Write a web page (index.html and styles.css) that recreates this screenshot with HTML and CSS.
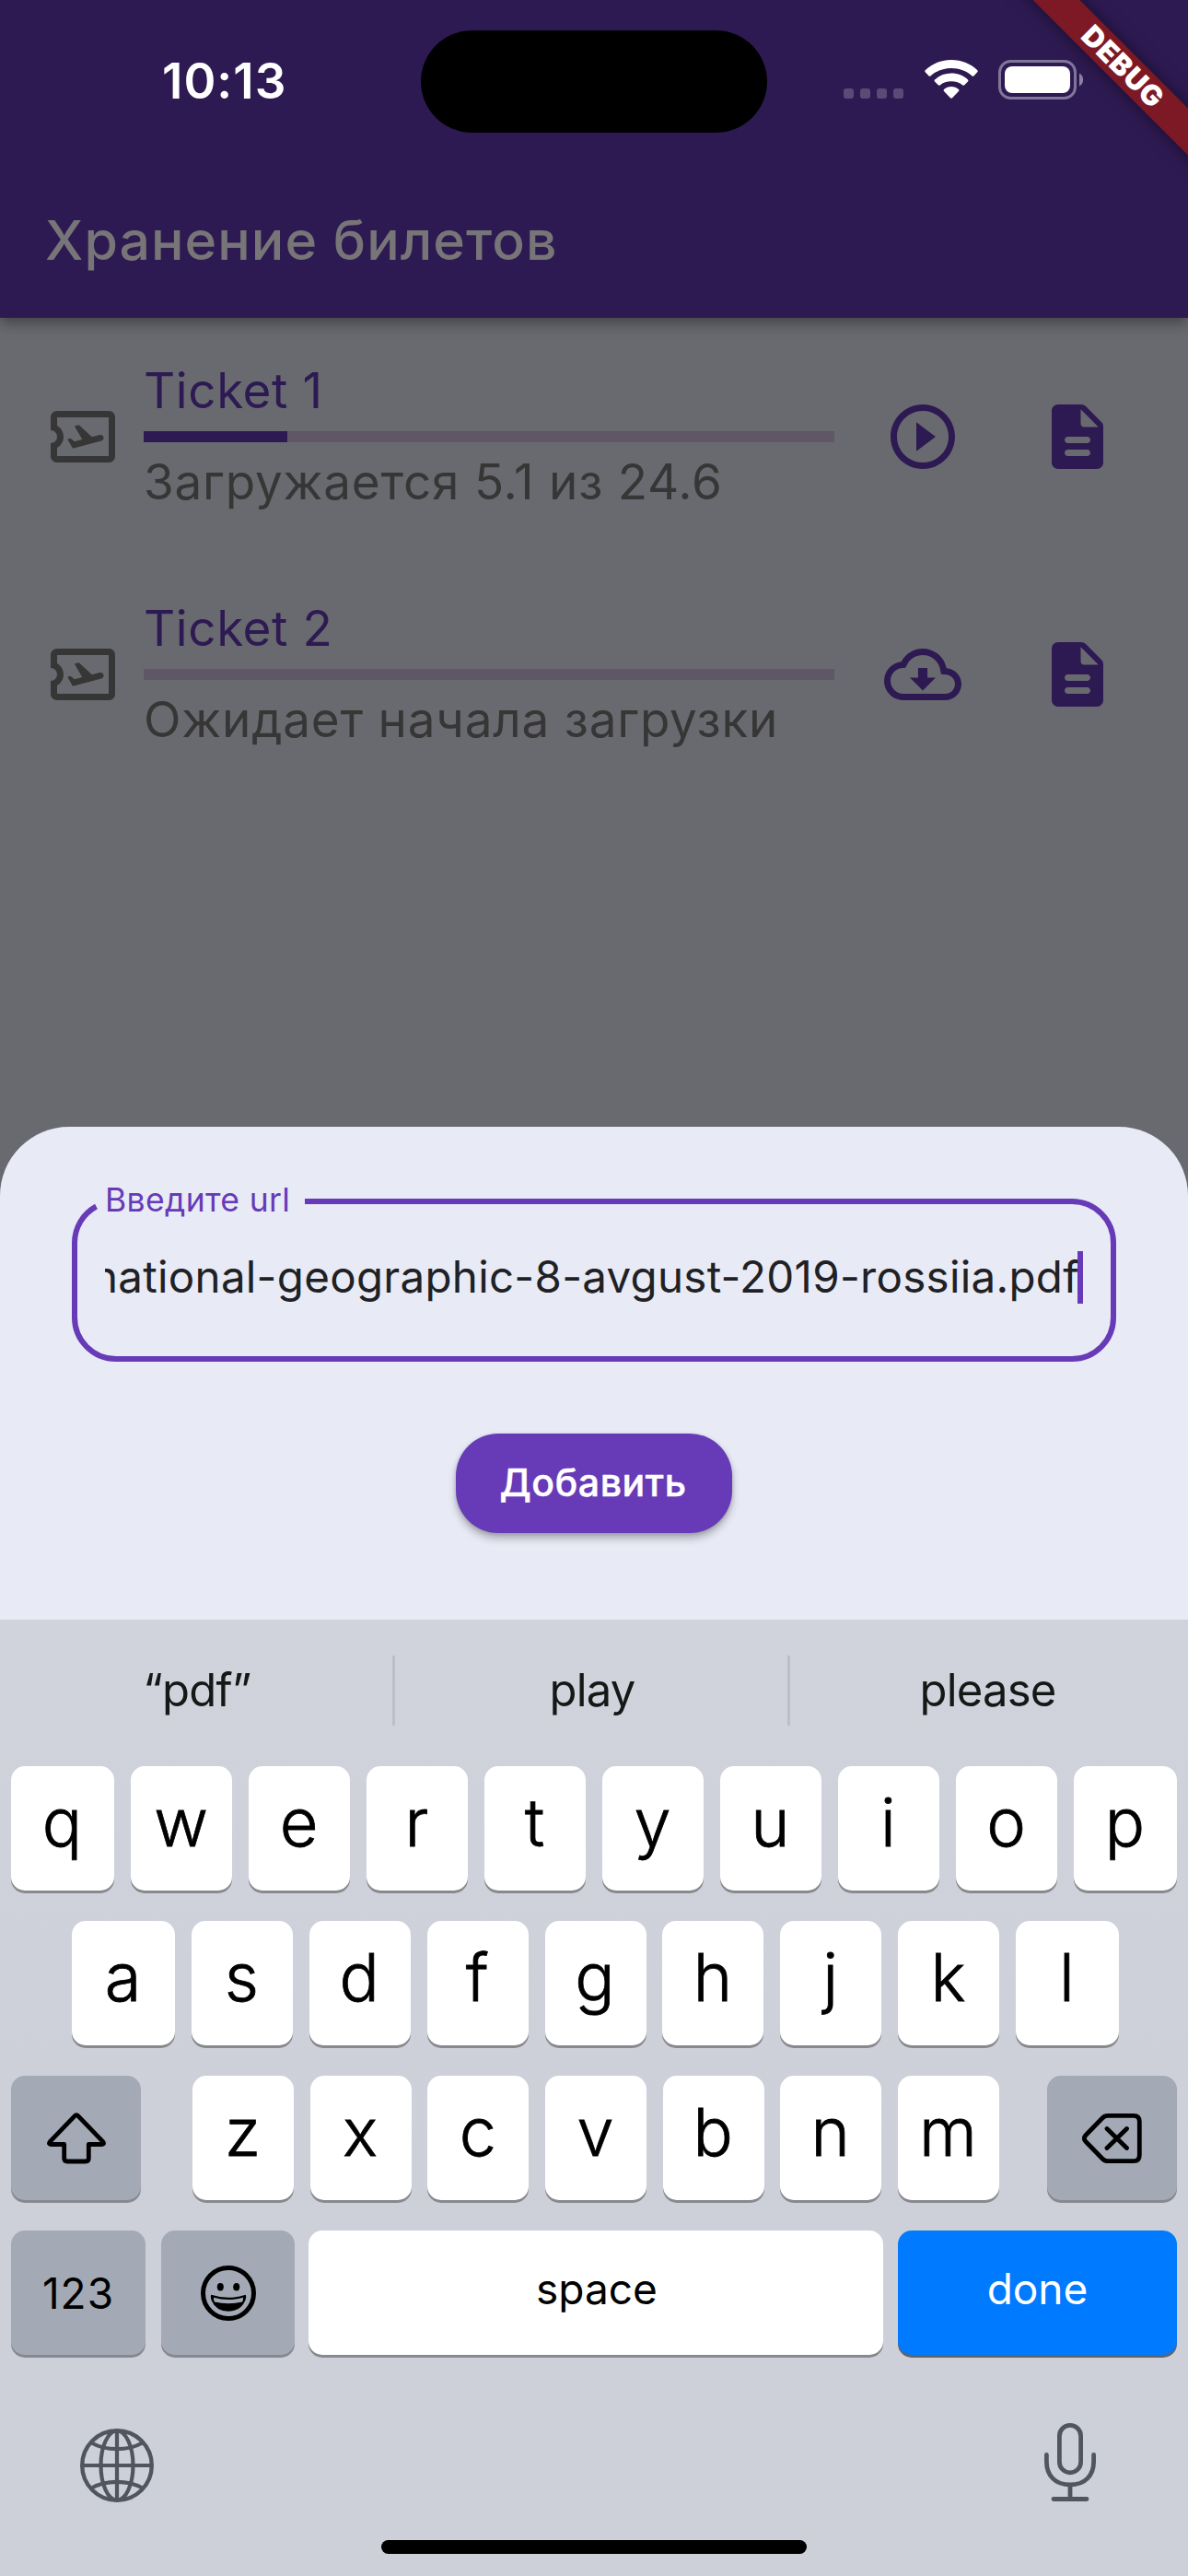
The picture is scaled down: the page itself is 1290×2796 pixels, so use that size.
FILE: index.html
```html
<!DOCTYPE html>
<html lang="ru">
<head>
<meta charset="utf-8">
<title>Хранение билетов</title>
<link rel="stylesheet" href="styles.css">
</head>
<body>
<svg class="defs" width="0" height="0" aria-hidden="true">
  <symbol id="ticket" viewBox="0 0 24 24">
    <path d="M20.19 4H4c-1.1 0-1.99.9-1.99 2v4c1.1 0 1.99.9 1.99 2s-.89 2-2 2v4c0 1.1.9 2 2 2h16.19c1 0 1.81-.9 1.81-2V6c0-1.1-.81-2-1.81-2zM20 18H4v-2.54c1.19-.69 2-1.99 2-3.46 0-1.48-.8-2.77-1.99-3.46L4 6h16v12z"/>
    <path d="M17.73 13.3l-8.86 2.36-1.66-2.88.93-.25 1.26.99 2.39-.64-2.4-4.16 1.4-.38 4.01 3.74 2.44-.65c.51-.14 1.04.17 1.18.68.13.51-.17 1.04-.69 1.19z"/>
  </symbol>
  <symbol id="play" viewBox="0 0 24 24">
    <path d="M10 16.5l6-4.5-6-4.5v9zM12 2C6.48 2 2 6.48 2 12s4.48 10 10 10 10-4.48 10-10S17.52 2 12 2zm0 18c-4.41 0-8-3.59-8-8s3.59-8 8-8 8 3.59 8 8-3.59 8-8 8z"/>
  </symbol>
  <symbol id="cloud" viewBox="0 0 24 24">
    <path d="M19.35 10.04C18.67 6.59 15.64 4 12 4 9.11 4 6.6 5.64 5.35 8.04 2.34 8.36 0 10.91 0 14c0 3.31 2.69 6 6 6h13c2.76 0 5-2.24 5-5 0-2.64-2.05-4.78-4.65-4.96zM19 18H6c-2.21 0-4-1.79-4-4 0-2.05 1.53-3.76 3.56-3.97l1.07-.11.5-.95C8.08 7.14 9.94 6 12 6c2.62 0 4.88 1.86 5.39 4.43l.3 1.5 1.53.11c1.56.1 2.78 1.41 2.78 2.96 0 1.65-1.35 3-3 3z"/>
    <path d="M13.45 10h-2.9v3H8l4 4 4-4h-2.55z"/>
  </symbol>
  <symbol id="doc" viewBox="0 0 24 24">
    <path d="M14.59 2.59c-.38-.38-.89-.59-1.42-.59H6c-1.1 0-2 .9-2 2v16c0 1.1.9 2 2 2h12c1.1 0 2-.9 2-2V8.83c0-.53-.21-1.04-.59-1.41l-4.82-4.83zM15 18H9c-.55 0-1-.45-1-1s.45-1 1-1h6c.55 0 1 .45 1 1s-.45 1-1 1zm0-4H9c-.55 0-1-.45-1-1s.45-1 1-1h6c.55 0 1 .45 1 1s-.45 1-1 1zm-2-6V3.5L18.5 9H14c-.55 0-1-.45-1-1z"/>
  </symbol>
</svg>

<div class="phone">
  <header class="header">
    <div class="status">
      <span class="time">10:13</span>
      <span class="island"></span>
      <div class="indicators">
        <span class="dots"><i></i><i></i><i></i><i></i></span>
        <svg class="wifi" viewBox="0 0 58 43">
          <path fill="#fff" d="M29 0C40 0 50.500 4.400 57.300 11.300Q58.200 12.300 57.300 13.300L53.600 17.300Q52.600 18.300 51.600 17.400C45.500 12 37.500 9 29 9S12.500 12 6.400 17.400Q5.400 18.300 4.400 17.300L.7 13.300Q-.2 12.300.7 11.300C7.500 4.400 18 0 29 0Z"/>
          <path fill="#fff" d="M29 14.600C36 14.600 42.300 17.200 47 21.500Q47.900 22.500 47 23.500L43.300 27.300Q42.300 28.200 41.300 27.400C38 24.600 33.700 23.300 29 23.300S20 24.600 16.700 27.400Q15.700 28.200 14.700 27.300L11 23.500Q10.100 22.500 11 21.500C15.700 17.200 22 14.600 29 14.600Z"/>
          <path fill="#fff" d="M29 28.900C32 28.900 34.800 30 37 31.900Q38 32.900 37 33.900L30.300 41.100Q29 42.400 27.700 41.100L21 33.900Q20 32.900 21 31.900C23.200 30 26 28.900 29 28.900Z"/>
        </svg>
        <svg class="battery" viewBox="0 0 95 43">
          <rect x="1.500" y="1.500" width="82" height="40" rx="12" fill="none" stroke="#82759a" stroke-width="3"/>
          <rect x="7" y="7" width="71" height="29" rx="8" fill="#fff"/>
          <path d="M88 14.500a8 8 0 0 1 0 14z" fill="#8d80a1"/>
        </svg>
      </div>
    </div>
    <h1 class="title">Хранение билетов</h1>
    <div class="ribbon">DEBUG</div>
  </header>

  <main class="list">
    <div class="tile">
      <svg class="icon"><use href="#ticket"/></svg>
      <div class="info">
        <div class="name">Ticket 1</div>
        <div class="track"><div class="fill" style="width:20.8%"></div></div>
        <div class="state">Загружается 5.1 из 24.6</div>
      </div>
      <svg class="icon action"><use href="#play"/></svg>
      <svg class="icon action"><use href="#doc"/></svg>
    </div>
    <div class="tile">
      <svg class="icon"><use href="#ticket"/></svg>
      <div class="info">
        <div class="name">Ticket 2</div>
        <div class="track"></div>
        <div class="state">Ожидает начала загрузки</div>
      </div>
      <svg class="icon action"><use href="#cloud"/></svg>
      <svg class="icon action"><use href="#doc"/></svg>
    </div>
  </main>

  <section class="sheet">
    <div class="field">
      <svg class="outline" viewBox="0 0 1134 177">
        <path d="M253 3H1086A45 45 0 0 1 1131 48V129A45 45 0 0 1 1086 174H48A45 45 0 0 1 3 129V48A45 45 0 0 1 26.500 8.500" fill="none" stroke="#673ab7" stroke-width="6"/>
      </svg>
      <span class="label">Введите url</span>
      <div class="value"><span>national-geographic-8-avgust-2019-rossiia.pdf</span></div>
      <span class="caret"></span>
    </div>
    <div class="add">Добавить</div>
  </section>

  <section class="keyboard">
    <div class="suggest">
      <span>“pdf”</span><span>play</span><span>please</span>
    </div>
    <div class="keys">
      <div class="row">
        <span class="key edge">q</span><span class="key">w</span><span class="key">e</span><span class="key">r</span><span class="key">t</span><span class="key">y</span><span class="key">u</span><span class="key">i</span><span class="key">o</span><span class="key edge">p</span>
      </div>
      <div class="row middle">
        <span class="key edge">a</span><span class="key">s</span><span class="key">d</span><span class="key">f</span><span class="key">g</span><span class="key">h</span><span class="key">j</span><span class="key">k</span><span class="key edge">l</span>
      </div>
      <div class="row">
        <span class="key gray shift">
          <svg width="64" height="56" viewBox="0 0 64 56"><path d="M30.200 3.600Q32 1.700 33.800 3.600L60.800 31.600Q62.800 34.500 59.500 34.500H45.300V49.500Q45.300 53 41.800 53H22.200Q18.700 53 18.700 49.500V34.500H4.500Q1.200 34.500 3.200 31.600Z" fill="none" stroke="#000" stroke-width="4.800" stroke-linejoin="round"/></svg>
        </span>
        <span class="letters"><span class="key">z</span><span class="key">x</span><span class="key">c</span><span class="key">v</span><span class="key">b</span><span class="key">n</span><span class="key">m</span></span>
        <span class="key gray shift">
          <svg width="65" height="54" viewBox="0 0 65 54"><path d="M28 2.400H56Q62.300 2.400 62.300 8.700V45.300Q62.300 51.600 56 51.600H28Q24.500 51.600 22 49L4 30.500Q.7 27 4 23.500L22 5Q24.500 2.400 28 2.400ZM27 16.500L48.500 37.500M48.500 16.500L27 37.500" fill="none" stroke="#000" stroke-width="4.800" stroke-linecap="round" stroke-linejoin="round"/></svg>
        </span>
      </div>
      <div class="row">
        <span class="key gray num">123</span>
        <span class="key gray emoji">
          <svg width="60" height="60" viewBox="0 0 60 60">
            <circle cx="30" cy="30" r="27.500" fill="none" stroke="#000" stroke-width="5"/>
            <ellipse cx="21.300" cy="23.300" rx="3.500" ry="4.200"/><ellipse cx="38.700" cy="23.300" rx="3.500" ry="4.200"/>
            <path d="M11.500 31.800Q30 37.800 48.500 31.800Q50 33 48.300 38Q43.500 49.500 30 49.800Q16.500 49.500 11.700 38Q10 33 11.500 31.800Z"/>
            <path d="M14 34.700Q30 39.500 46 34.700Q46.200 37.500 45 39.600Q30 42.800 15 39.600Q13.800 37.500 14 34.700Z" fill="#a3a9b5"/>
          </svg>
        </span>
        <span class="key space">space</span>
        <span class="key done">done</span>
      </div>
    </div>
    <div class="dock">
      <svg width="80" height="80" viewBox="0 0 80 80" fill="none" stroke="#50555e" stroke-width="4.200">
        <circle cx="40" cy="40" r="37.800" stroke-width="4.400"/>
        <path d="M40 2V78M2 40H78"/>
        <ellipse cx="40" cy="40" rx="17.500" ry="37.500"/>
        <path d="M12.500 15.500Q24 22.200 40 22.200T67.500 15.500M12.500 64.500Q24 57.800 40 57.800T67.500 64.500"/>
      </svg>
      <svg width="56" height="86" viewBox="0 0 56 86" fill="none" stroke="#50555e" stroke-width="4.800" stroke-linecap="round">
        <rect x="16.400" y="2.400" width="23.200" height="51.400" rx="11.600"/>
        <path d="M2.400 34.500V42C2.400 57 12 67 28 67S53.600 57 53.600 42V34.500M28 67V81M10 82.500H46"/>
      </svg>
    </div>
    <div class="home"></div>
  </section>
</div>
</body>
</html>
```
FILE: styles.css
```css
* { box-sizing: border-box; }

body {
  margin: 0;
  font-family: Inter, "Noto Sans", sans-serif;
}

.defs { position: absolute; }

.phone {
  width: 1290px;
  height: 2796px;
  display: flex;
  flex-direction: column;
  background: #696a6f;
  overflow: hidden;
}

/* App bar with the system status row */
.header {
  position: relative;
  height: 345px;
  flex: none;
  background: #2e1a52;
  box-shadow: 0 6px 14px rgba(0, 0, 0, .36);
}

.status {
  height: 177px;
  display: grid;
  grid-template-columns: 457px 376px 1fr;
  align-items: center;
}

.time {
  padding: 0 0 2px 176px;
  color: #fff;
  font-size: 53px;
  font-weight: 600;
  line-height: 64px;
  letter-spacing: 1px;
}

.island {
  height: 111px;
  border-radius: 56px;
  background: #000;
}

.indicators {
  display: flex;
  align-items: center;
  padding-left: 83px;
  padding-bottom: 4px;
}

.dots { display: flex; gap: 7px; padding-top: 30px; }
.dots i { width: 11px; height: 11px; border-radius: 3px; background: #5b4a76; }
.wifi { width: 58px; height: 43px; margin-left: 23px; }
.battery { width: 95px; height: 43px; margin-left: 22px; }

.title {
  margin: 0;
  padding: 44px 0 0 49px;
  color: #777577;
  font-size: 59px;
  font-weight: 500;
  line-height: 80px;
  letter-spacing: 1.05px;
}

.ribbon {
  position: absolute;
  top: 53px;
  right: -108px;
  width: 360px;
  height: 36px;
  transform: rotate(45deg);
  background: #7d1825;
  box-shadow: 0 0 18px rgba(0, 0, 0, .5);
  color: #fff;
  font-size: 31px;
  font-weight: 900;
  line-height: 36px;
  letter-spacing: .7px;
  text-align: center;
  text-indent: 4px;
}

/* Ticket list */
.list { height: 878px; flex: none; }

.tile {
  height: 258px;
  display: flex;
  align-items: center;
  padding-left: 48px;
}

.icon { width: 84px; height: 84px; flex: none; fill: #373636; }
.action { fill: #2e1a52; }
.info { width: 750px; margin: 0 54px 0 24px; }
.action + .action { margin-left: 84px; }

.name, .state {
  font-size: 53px;
  line-height: 87px;
  letter-spacing: .6px;
  white-space: nowrap;
}
.name { color: #2e1a52; }
.state { color: #373636; letter-spacing: .78px; }
.track { height: 12px; background: #5f5766; }
.fill { height: 12px; background: #2e1a52; }

/* Bottom sheet */
.sheet {
  height: 535px;
  flex: none;
  padding: 78px 78px 0;
  border-radius: 75px 75px 0 0;
  background: #e8eaf6;
  display: flex;
  flex-direction: column;
  align-items: center;
}

.field {
  position: relative;
  width: 1134px;
  height: 177px;
  padding: 51px 36px 0;
  display: flex;
}

.outline { position: absolute; inset: 0; width: 1134px; height: 177px; }

.label {
  position: absolute;
  left: 36px;
  top: -19px;
  color: #673ab7;
  font-size: 35.5px;
  line-height: 42px;
  letter-spacing: .35px;
  white-space: nowrap;
}

.value {
  width: 1058px;
  height: 68px;
  display: flex;
  justify-content: flex-end;
  overflow: hidden;
  color: #202124;
  font-size: 47.5px;
  line-height: 68px;
  letter-spacing: .28px;
  white-space: nowrap;
}

.caret { width: 6px; height: 57px; margin-top: 6px; margin-left: -2px; background: #673ab7; flex: none; }

.add {
  width: 300px;
  height: 108px;
  margin-top: 78px;
  border-radius: 46px;
  background: #673ab7;
  box-shadow: 0 6px 9px rgba(0, 0, 0, .26), 0 1px 4px rgba(0, 0, 0, .14);
  color: #fff;
  font-size: 41px;
  font-weight: 500;
  -webkit-text-stroke: .5px #fff;
  line-height: 107px;
  letter-spacing: .6px;
  text-indent: -2px;
  text-align: center;
}

/* Keyboard */
.keyboard {
  position: relative;
  height: 1038px;
  flex: none;
  background: linear-gradient(#d0d3dc, #cdd0d9 55%, #cdd0d9);
}

.suggest {
  height: 154px;
  display: grid;
  grid-template-columns: 426px 429px 1fr;
  align-items: center;
  color: #161817;
  font-size: 49px;
  line-height: 76px;
  letter-spacing: -.8px;
  text-align: center;
}
.suggest span + span { border-left: 3px solid #bcbfc8; }
.suggest span:first-child { padding-left: 2px; }
.suggest span:nth-child(2) { padding-left: 2px; }
.suggest span:last-child { padding-right: 3px; }

.keys {
  padding: 5px 12px 0;
  display: grid;
  gap: 33px;
}

.row { display: flex; justify-content: space-between; height: 135px; }
.middle { padding: 0 63px 0 66px; }
.letters { display: flex; justify-content: space-between; width: 876px; margin-left: 4px; }

.key {
  width: 110px;
  height: 135px;
  padding: 0 1px 15px 0;
  border-radius: 15px;
  background: #fff;
  box-shadow: 0 3px 0 #88898e;
  display: flex;
  align-items: center;
  justify-content: center;
  color: #000;
  font-size: 72px;
  font-weight: 300;
  -webkit-text-stroke: .8px currentColor;
}
.edge { width: 112px; }
.gray { background: #a3a9b5; padding: 0; }
.shift { width: 141px; }
.num, .space, .done { font-size: 46px; font-weight: 400; -webkit-text-stroke: 0; }
.num { width: 146px; letter-spacing: 1px; }
.emoji { width: 145px; margin-left: 1px; }
.space { width: 624px; margin-left: -1px; padding: 0 0 10px 2px; }
.done { width: 303px; padding: 0 0 10px; background: #007aff; color: #fff; box-shadow: 0 3px 0 #5f636c; }

.dock {
  display: flex;
  align-items: flex-start;
  justify-content: space-between;
  padding: 74px 100px 0 87px;
}
.dock svg:first-child { margin-top: 6px; }

.home {
  width: 462px;
  height: 15px;
  margin: 41px auto 0;
  border-radius: 8px;
  background: #000;
}
```
